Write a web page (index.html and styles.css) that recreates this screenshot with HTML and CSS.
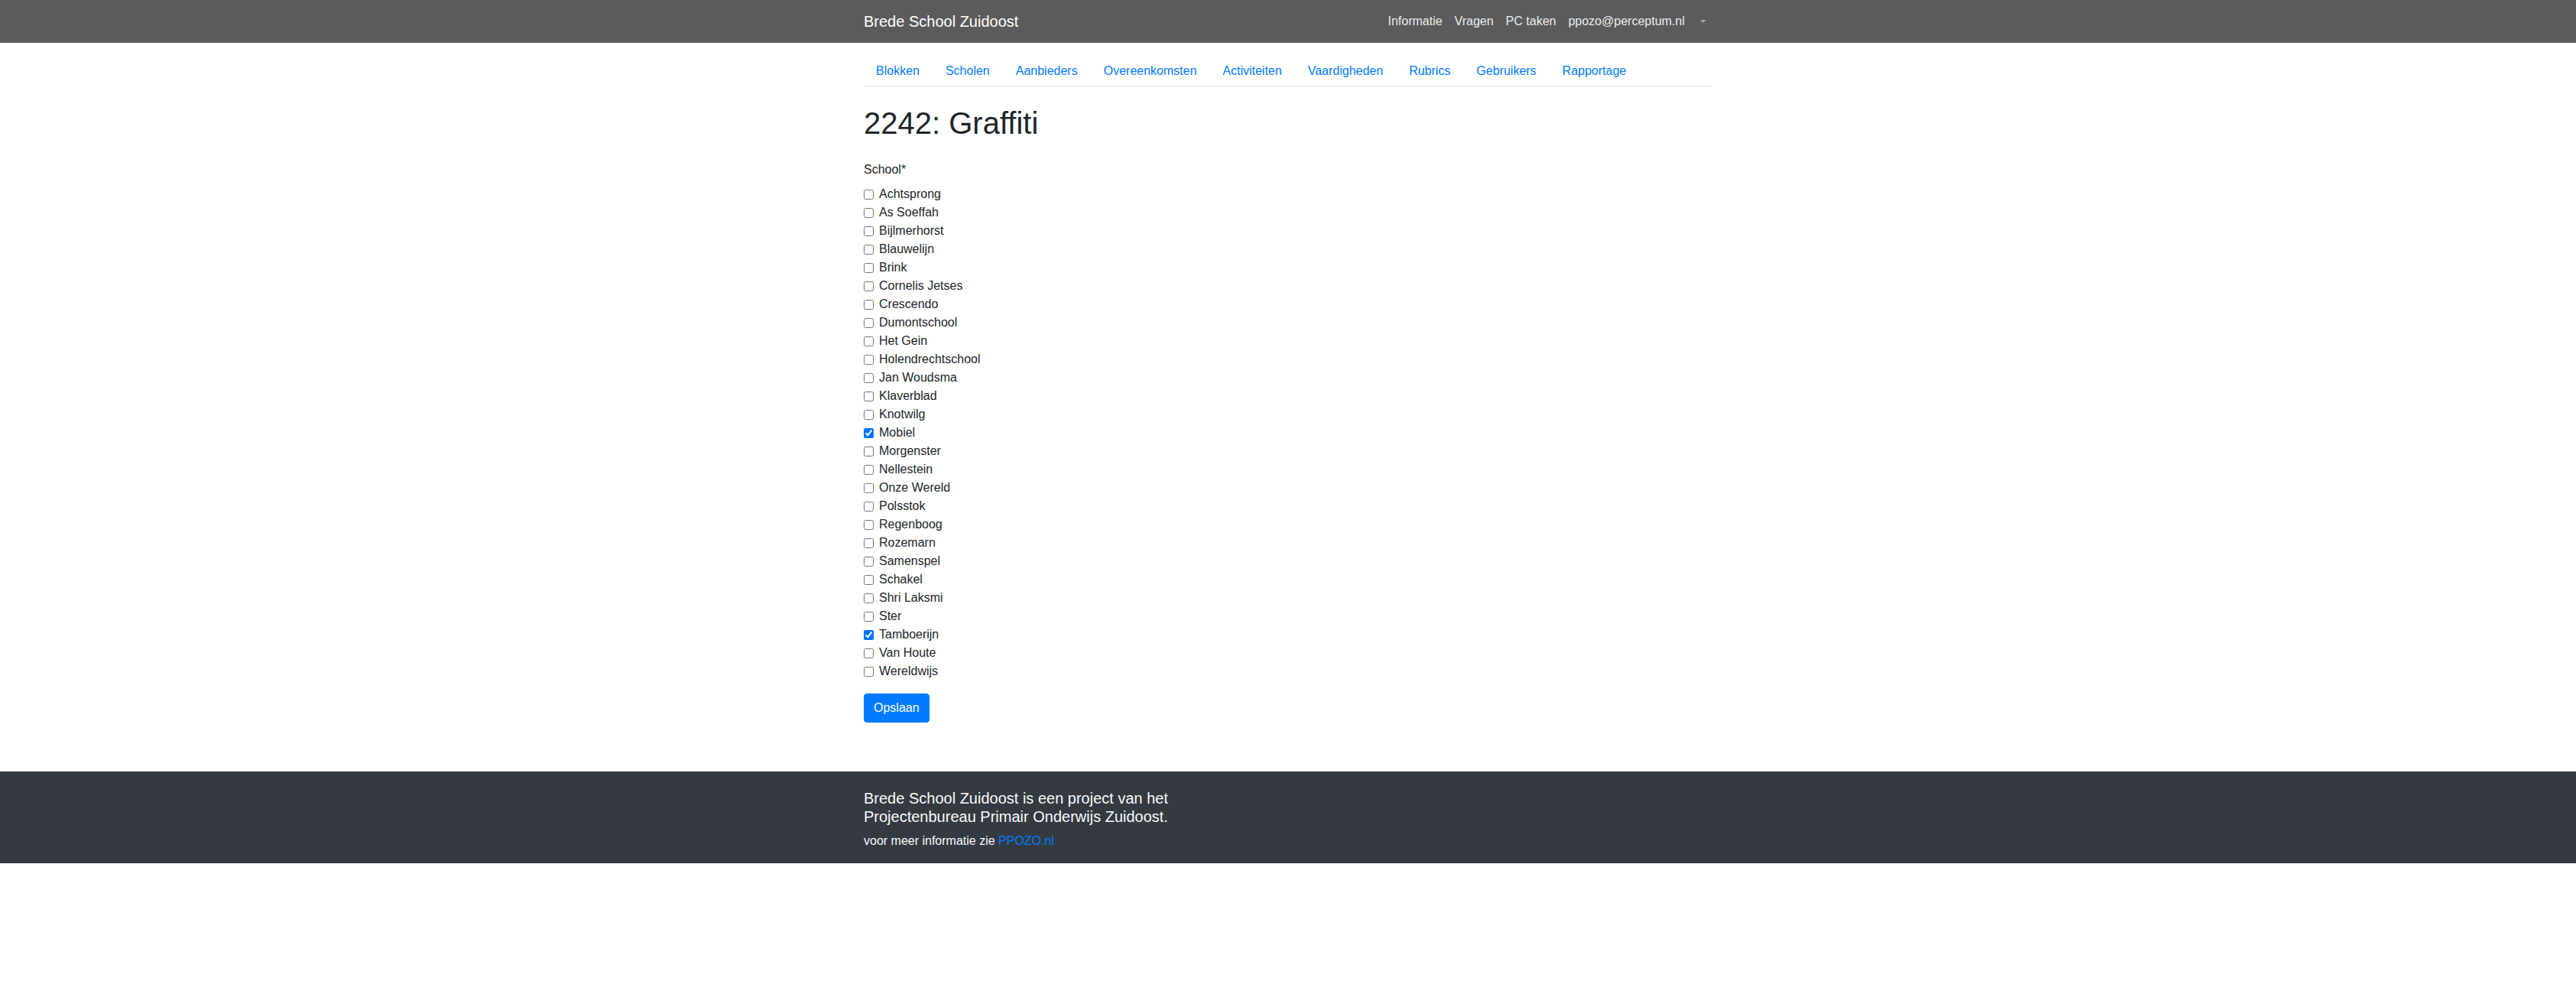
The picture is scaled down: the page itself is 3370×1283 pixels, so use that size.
FILE: index.html
```html
<!DOCTYPE html>
<html lang="nl">
<head>
<meta charset="utf-8">
<title>2242: Graffiti - Brede School Zuidoost</title>
<link rel="stylesheet" href="styles.css">
</head>
<body>
<header class="navbar">
  <div class="container navbar-inner">
    <a class="brand" href="#">Brede School Zuidoost</a>
    <nav class="navbar-nav">
      <a class="nav-item" href="#">Informatie</a>
      <a class="nav-item" href="#">Vragen</a>
      <a class="nav-item" href="#">PC taken</a>
      <a class="nav-item" href="#">ppozo@perceptum.nl</a>
      <a class="nav-item dropdown-toggle" href="#"></a>
    </nav>
  </div>
</header>

<main class="container">
  <nav class="tabs">
    <a class="tab" href="#">Blokken</a>
    <a class="tab" href="#">Scholen</a>
    <a class="tab" href="#">Aanbieders</a>
    <a class="tab" href="#">Overeenkomsten</a>
    <a class="tab" href="#">Activiteiten</a>
    <a class="tab" href="#">Vaardigheden</a>
    <a class="tab" href="#">Rubrics</a>
    <a class="tab" href="#">Gebruikers</a>
    <a class="tab" href="#">Rapportage</a>
  </nav>

  <h1 class="title">2242: Graffiti</h1>

  <form class="form">
    <div class="field-label">School*</div>
    <div class="checks">
      <label class="check"><input type="checkbox"><span>Achtsprong</span></label>
      <label class="check"><input type="checkbox"><span>As Soeffah</span></label>
      <label class="check"><input type="checkbox"><span>Bijlmerhorst</span></label>
      <label class="check"><input type="checkbox"><span>Blauwelijn</span></label>
      <label class="check"><input type="checkbox"><span>Brink</span></label>
      <label class="check"><input type="checkbox"><span>Cornelis Jetses</span></label>
      <label class="check"><input type="checkbox"><span>Crescendo</span></label>
      <label class="check"><input type="checkbox"><span>Dumontschool</span></label>
      <label class="check"><input type="checkbox"><span>Het Gein</span></label>
      <label class="check"><input type="checkbox"><span>Holendrechtschool</span></label>
      <label class="check"><input type="checkbox"><span>Jan Woudsma</span></label>
      <label class="check"><input type="checkbox"><span>Klaverblad</span></label>
      <label class="check"><input type="checkbox"><span>Knotwilg</span></label>
      <label class="check"><input type="checkbox" checked><span>Mobiel</span></label>
      <label class="check"><input type="checkbox"><span>Morgenster</span></label>
      <label class="check"><input type="checkbox"><span>Nellestein</span></label>
      <label class="check"><input type="checkbox"><span>Onze Wereld</span></label>
      <label class="check"><input type="checkbox"><span>Polsstok</span></label>
      <label class="check"><input type="checkbox"><span>Regenboog</span></label>
      <label class="check"><input type="checkbox"><span>Rozemarn</span></label>
      <label class="check"><input type="checkbox"><span>Samenspel</span></label>
      <label class="check"><input type="checkbox"><span>Schakel</span></label>
      <label class="check"><input type="checkbox"><span>Shri Laksmi</span></label>
      <label class="check"><input type="checkbox"><span>Ster</span></label>
      <label class="check"><input type="checkbox" checked><span>Tamboerijn</span></label>
      <label class="check"><input type="checkbox"><span>Van Houte</span></label>
      <label class="check"><input type="checkbox"><span>Wereldwijs</span></label>
    </div>
    <button type="button" class="btn">Opslaan</button>
  </form>
</main>

<footer class="footer">
  <div class="container">
    <p class="footer-lead">Brede School Zuidoost is een project van het Projectenbureau Primair Onderwijs Zuidoost.</p>
    <p class="footer-small">voor meer informatie zie <a href="#" class="footer-link">PPOZO.nl</a></p>
  </div>
</footer>
</body>
</html>
```

FILE: styles.css
```css
* { box-sizing: border-box; }

body {
  margin: 0;
  font-family: "Liberation Sans", Arial, sans-serif;
  font-size: 16px;
  line-height: 1.5;
  color: #212529;
  background: #fff;
}

a { text-decoration: none; }

.container {
  width: 1140px;
  margin: 0 auto;
  padding: 0 15px;
}

/* top navbar */
.navbar {
  background: #5b5b5b;
  padding: 8px 0;
}
.navbar-inner {
  display: flex;
  align-items: center;
  justify-content: space-between;
}
.brand {
  color: #fff;
  font-size: 20px;
  line-height: 30px;
  padding: 5px 0;
}
.navbar-nav {
  display: flex;
  align-items: center;
}
.nav-item {
  color: #ececec;
  padding: 8px;
  line-height: 24px;
}
.dropdown-toggle {
  display: flex;
  align-items: center;
  height: 40px;
}
.dropdown-toggle::after {
  content: "";
  display: inline-block;
  margin-left: 4px;
  border-top: 4.8px solid #a3a3a3;
  border-left: 4.8px solid transparent;
  border-right: 4.8px solid transparent;
}

/* tabs */
.tabs {
  display: flex;
  margin-top: 16px;
  border-bottom: 1px solid #dee2e6;
}
.tab {
  color: #007bff;
  padding: 9px 17px 7px 16px;
  margin-right: 1px;
  line-height: 24px;
}

.title {
  margin: 24px 0 24px;
  font-size: 40px;
  font-weight: 500;
  line-height: 1.2;
}

.field-label {
  margin-bottom: 8px;
  padding-top: 1px;
}

.checks {
  display: flex;
  flex-direction: column;
  margin-bottom: 17px;
}
.check {
  display: flex;
  align-items: flex-start;
  line-height: 24px;
  height: 24px;
}
.check input {
  width: 13px;
  height: 13px;
  margin: 6px 7px 0 0;
  flex: none;
}

.btn {
  display: inline-block;
  font-family: inherit;
  font-size: 16px;
  line-height: 24px;
  padding: 6px 12px;
  color: #fff;
  background: #007bff;
  border: 1px solid #007bff;
  border-radius: 4px;
  height: 38px;
}

.footer {
  margin-top: 64px;
  background: #343a40;
  color: #f8f9fa;
  padding: 23px 0 17px;
}
.footer-lead {
  margin: 0 0 8px;
  font-size: 20px;
  line-height: 24px;
  max-width: 420px;
}
.footer-small {
  margin: 0;
  font-size: 16px;
  line-height: 24px;
}
.footer-link { color: #007bff; }
```
